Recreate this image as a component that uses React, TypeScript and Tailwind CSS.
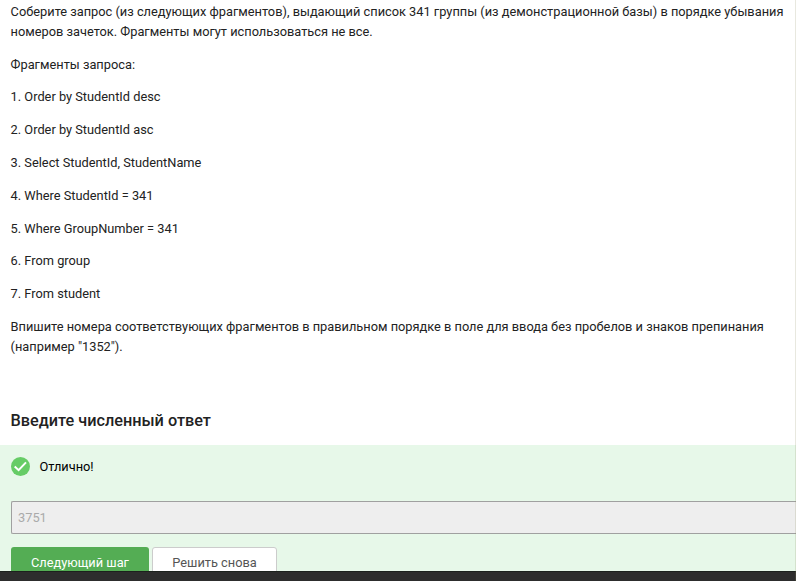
const fragments = [
  'Order by StudentId desc',
  'Order by StudentId asc',
  'Select StudentId, StudentName',
  'Where StudentId = 341',
  'Where GroupNumber = 341',
  'From group',
  'From student',
];

export default function App() {
  return (
    <div className="relative flex h-[581px] w-[796px] flex-col overflow-hidden bg-white font-[Roboto,sans-serif] text-[12.8px] leading-5 text-[#222222]">
      <main className="flex h-[445px] shrink-0 flex-col gap-[12.8px] pl-[10.6px] pt-[1.85px]">
        <p className="whitespace-nowrap">
          Соберите запрос (из следующих фрагментов), выдающий список 341 группы (из демонстрационной базы) в порядке убывания
          <br />
          номеров зачеток. Фрагменты могут использоваться не все.
        </p>
        <p>Фрагменты запроса:</p>
        {fragments.map((text, i) => (
          <p key={text}>{i + 1}. {text}</p>
        ))}
        <p className="whitespace-nowrap">
          Впишите номера соответствующих фрагментов в правильном порядке в поле для ввода без пробелов и знаков препинания
          <br />
          (например "1352").
        </p>
        <h2 className="mt-[41px] text-[16.25px] font-medium leading-5">Введите численный ответ</h2>
      </main>
      <section className="flex h-[126px] shrink-0 flex-col overflow-hidden bg-[#e7f8e9] pl-[11px]">
        <div className="mt-3 flex h-5 items-start gap-[9.5px] text-black">
          <svg width="19" height="19" viewBox="0 0 19 19" fill="none">
            <circle cx="9.5" cy="9.5" r="9.5" fill="#66cc66" />
            <path d="M3.7 9.5 L7.6 13.2 L15 5.4" stroke="white" strokeWidth="2" />
          </svg>
          <span>Отлично!</span>
        </div>
        <div className="mt-6 flex h-[33px] shrink-0 items-center rounded-l-[2px] border border-r-0 border-[#a0a0a0] bg-[#eeeeee] pl-[6px] text-[#aaaaaa]">3751</div>
        <div className="mt-[13px] flex gap-[3px]">
          <button className="h-8 w-[138px] rounded-[3px] bg-[#54ad54] text-white">Следующий шаг</button>
          <button className="h-8 w-[125px] rounded-[3px] border border-[#cccccc] bg-white text-[#555555]">Решить снова</button>
        </div>
      </section>
      <footer className="h-[10px] shrink-0 border-t border-[#1c211d] bg-[#2d2d2d]" />
      <div className="absolute inset-y-0 right-0 w-px bg-[#8b8b60]/20" />
    </div>
  );
}
